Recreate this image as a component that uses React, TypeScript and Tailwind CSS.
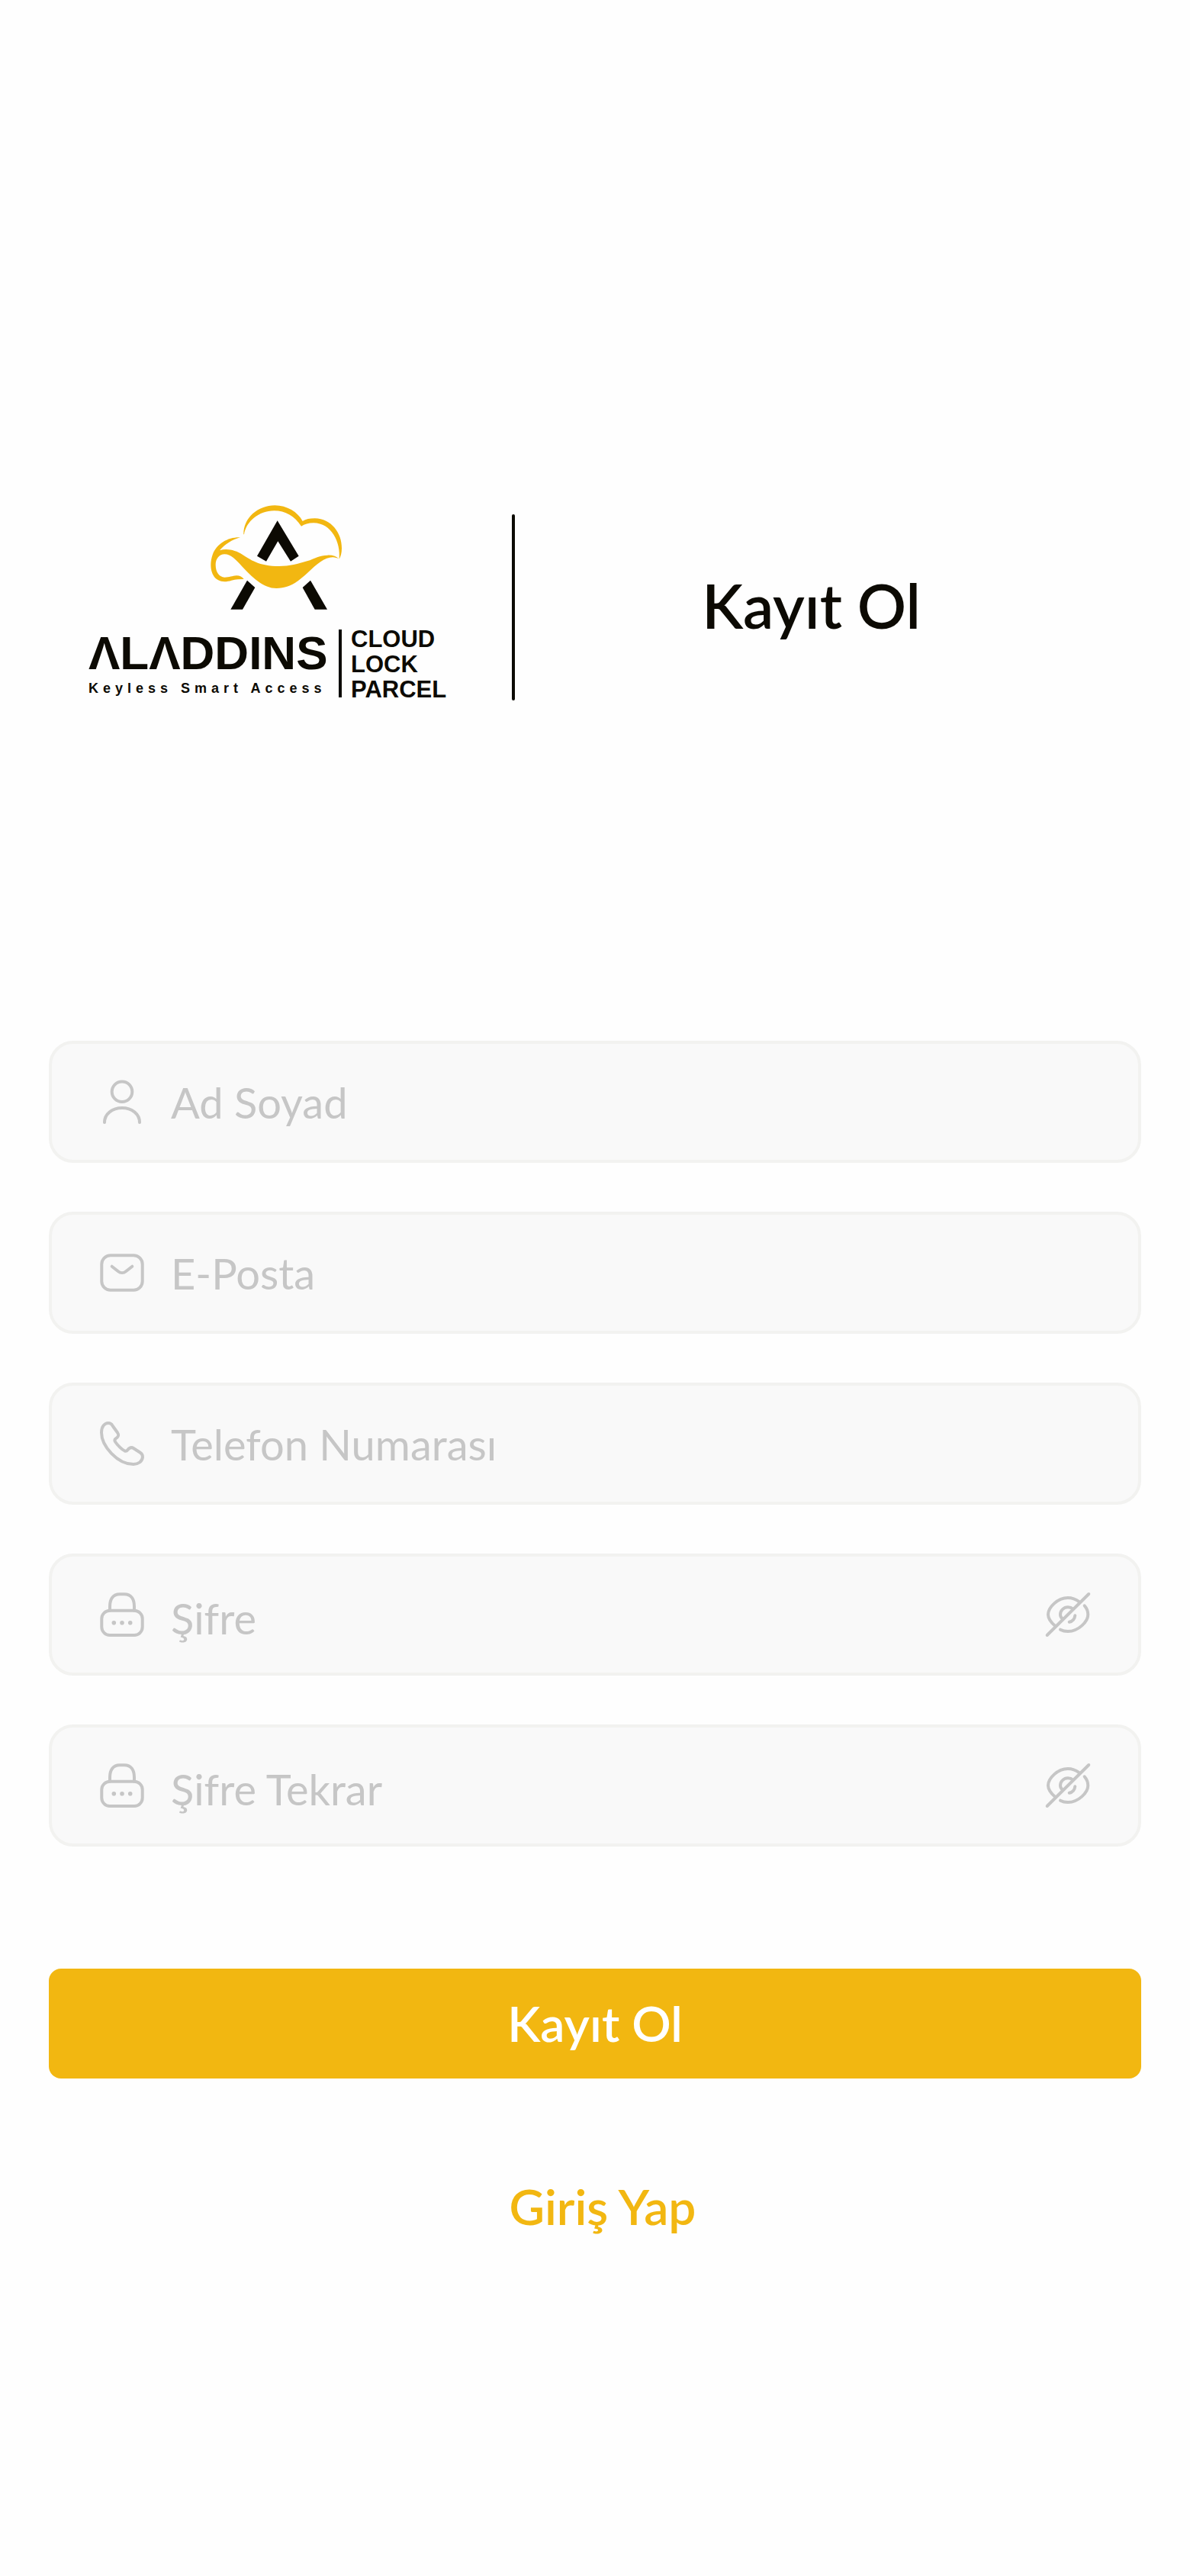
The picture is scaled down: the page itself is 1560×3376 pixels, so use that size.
import type { ReactNode } from "react";

interface IconProps {
  children: ReactNode;
}

function Icon({ children }: IconProps) {
  return (
    <svg
      viewBox="0 0 64 64"
      className="size-16 shrink-0"
      fill="none"
      stroke="currentColor"
      strokeWidth="4"
      strokeLinecap="round"
      strokeLinejoin="round"
      aria-hidden="true"
    >
      {children}
    </svg>
  );
}

function UserIcon() {
  return (
    <Icon>
      <circle cx="32" cy="18.7" r="13.3" />
      <path d="M9 59C9 48 19 40 32 40s23 8 23 19" />
    </Icon>
  );
}

function MailIcon() {
  return (
    <Icon>
      <rect x="5.3" y="9.3" width="53.4" height="45.4" rx="11.5" />
      <path d="M18.7 23.7l8.3 6.6c3 2.4 7 2.4 10 0l8.3-6.6" />
    </Icon>
  );
}

function PhoneIcon() {
  return (
    <Icon>
      <path d="M14 5C16 5 18.3 6 19.5 8.5L26 17.5C28 20.5 27.5 22 25.5 24L23.5 25.5C22 27 22 28 23 29.5C26 34 32 40 35.5 41.5C37 42 38 42 39.5 40C41.5 37.5 44 36 47 38L55.5 43.5C58 45 59 47 59 49.5C58.5 55.5 53 59 47 59C26 59 5 35 5 17.5C5 9 9.5 5 14 5Z" />
    </Icon>
  );
}

function LockIcon() {
  return (
    <Icon>
      <rect x="5.3" y="26.7" width="53.4" height="32.3" rx="10.7" />
      <path d="M16 26.7V21.3C16 11.7 20 5.3 29 5.3h6c9 0 13 6.4 13 16v5.4" />
      <g fill="currentColor" stroke="none">
        <circle cx="21.3" cy="42.7" r="2.8" />
        <circle cx="32" cy="42.7" r="2.8" />
        <circle cx="42.7" cy="42.7" r="2.8" />
      </g>
    </Icon>
  );
}

function EyeSlashIcon() {
  return (
    <Icon>
      <path d="M59.3 5L4.7 59" />
      <path d="M15.3 47C10 42.5 6 37 6 32C6 23 18 10 32 10C37.5 10 42.5 12 47 15.3" />
      <path d="M53.7 20.3C57 24 58.3 28 58.3 32C58.3 41 46 54 32 54C28.5 54 25 53.3 22 51.7" />
      <path d="M24.7 37.3C23 36 22 34 22 32C22 26.5 26.5 22.3 32 22.3C34.5 22.3 37 23.2 38.7 24.7" />
      <path d="M41.3 33.3C40.8 37.5 38 41 33.7 41.7" />
    </Icon>
  );
}

function Logo() {
  return (
    <div className="flex flex-col gap-[22px] font-['Liberation_Sans',Arial,sans-serif] font-bold text-[#0c0a03]">
      <svg viewBox="50 35 519 411" className="ml-40 h-[137px] w-[173px]" aria-hidden="true">
        <g fill="#0c0a03">
          <path d="M313 96L397 235L365 256L315 177L269 256L233 235Z" />
          <path d="M194 331L225 359L176 445H129Z" />
          <path d="M443 331L509 445H460L412 359Z" />
        </g>
        <g fill="#f2b711">
          <path d="M180 150C179 85 237 36 303 36C350 36 393 62 412 98C425 90 440 87 460 87C525 88 567 145 566 205C566 222 562 238 556 247C563 182 525 105 455 105C435 105 420 110 407 118C380 78 345 57 300 57C240 57 190 100 182 150Z" />
          <path d="M167 162C120 160 75 185 58 230C42 275 52 335 105 336C125 336 140 328 158 327L181 326C175 317 165 312 152 312C135 313 125 319 105 319C85 318 70 300 70 270C70 245 85 228 105 228C130 228 150 250 175 277C220 325 260 362 309 362C360 362 395 335 430 303C470 265 500 240 530 240C540 241 548 243 554 246C545 236 530 231 510 232C480 232 460 245 430 255C395 266 360 275 320 275C240 275 205 248 175 229C150 213 115 203 86 213C105 190 135 170 167 162Z" />
        </g>
      </svg>
      <div className="flex gap-3">
        <div className="w-[316px] pt-1 whitespace-nowrap">
          <p className="text-[62px] leading-[62px]">ΛLΛDDINS</p>
          <p className="text-[18px] leading-[30px] tracking-[6px]">Keyless Smart Access</p>
        </div>
        <div className="mt-1 h-[89px] w-1 bg-[#0c0a03]" />
        <p className="text-[31px] leading-[33px]">
          CLOUD
          <br />
          LOCK
          <br />
          PARCEL
        </p>
      </div>
    </div>
  );
}

interface FieldProps {
  id: string;
  type: string;
  label: string;
  icon: ReactNode;
}

function Field({ id, type, label, icon }: FieldProps) {
  return (
    <div className="flex h-40 items-center gap-8 rounded-[32px] border-4 border-[#f2f2f0] bg-[#f9f9f9] px-[60px] text-[#c6c6c6]">
      <label htmlFor={id}>{icon}</label>
      <input
        id={id}
        type={type}
        placeholder={label}
        aria-label={label}
        className="h-full min-w-0 flex-1 bg-transparent text-[56px] text-gray-800 outline-none placeholder:text-[#c6c6c6] [&[type=password]]:pt-2"
      />
      {type === "password" && (
        <button type="button" aria-label="Şifreyi göster">
          <EyeSlashIcon />
        </button>
      )}
    </div>
  );
}

export default function App() {
  return (
    <main className="flex min-h-screen flex-col bg-[#fefefe] px-16 pt-[662px] pb-40 font-['Lato',sans-serif]">
      <header className="flex items-end pl-[52px]">
        <Logo />
        <div className="mb-0.5 ml-[86px] h-[244px] w-1 shrink-0 rounded-full bg-[#0c0a03]" />
        <h1 className="flex-1 self-center pt-1 pr-11 text-center text-[80px] leading-[96px] font-semibold text-[#0c0a03]">
          Kayıt Ol
        </h1>
      </header>

      <form className="mt-[444px] flex flex-col gap-16" onSubmit={(e) => e.preventDefault()}>
        <Field id="name" type="text" label="Ad Soyad" icon={<UserIcon />} />
        <Field id="email" type="email" label="E-Posta" icon={<MailIcon />} />
        <Field id="phone" type="tel" label="Telefon Numarası" icon={<PhoneIcon />} />
        <Field id="password" type="password" label="Şifre" icon={<LockIcon />} />
        <Field id="password-repeat" type="password" label="Şifre Tekrar" icon={<LockIcon />} />

        <button
          type="submit"
          className="mt-24 h-36 rounded-2xl bg-[#f2b711] text-[64px] font-semibold text-white"
        >
          Kayıt Ol
        </button>
      </form>

      <a
        href="#"
        className="mt-32 self-center pl-5 text-[64px] leading-[80px] font-semibold text-[#f2b711]"
      >
        Giriş Yap
      </a>
    </main>
  );
}
